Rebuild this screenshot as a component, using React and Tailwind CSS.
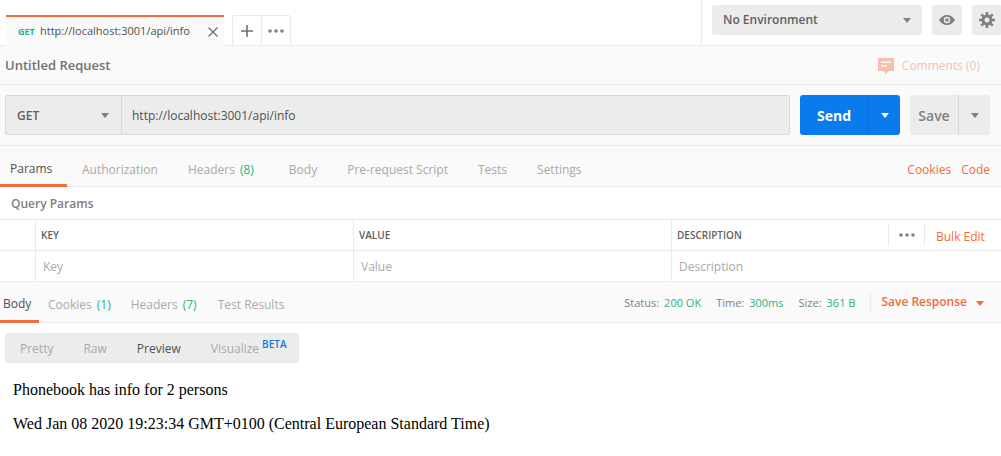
const sans = { fontFamily: '"Open Sans", sans-serif' };

const Caret = ({ className = 'border-t-[#808080]' }) => (
  <span className={`inline-block w-0 h-0 border-x-[4.5px] border-x-transparent border-t-[5px] ${className}`} />
);

const Dots = () => (
  <svg width="16" height="4" viewBox="0 0 16 4" fill="#808080">
    <circle cx="2" cy="2" r="1.8" />
    <circle cx="8" cy="2" r="1.8" />
    <circle cx="14" cy="2" r="1.8" />
  </svg>
);

function TopBar() {
  return (
    <div className="flex h-[46px] border-b border-[#eaeaea] bg-white">
      <div className="flex items-end pl-[6px]">
        <div className="flex items-center w-[218px] h-[31px] -mb-px border-t-2 border-[#f26b3a] bg-[#fafafa] pl-[12px] pr-[5px]">
          <span className="text-[9px] font-bold text-[#26b47f] w-[22px]">GET</span>
          <span className="text-[11px] text-[#505050] flex-1">http://localhost:3001/api/info</span>
          <svg width="12" height="12" viewBox="0 0 12 12" stroke="#707070" strokeWidth="1.3">
            <path d="M1.5 1.5l9 9M10.5 1.5l-9 9" />
          </svg>
        </div>
        <div className="flex h-[30px] ml-[8px] border border-b-0 border-[#eaeaea] rounded-t-[3px]">
          <div className="flex items-center justify-center w-[29px] border-r border-[#eaeaea]">
            <svg width="12" height="12" viewBox="0 0 12 12" stroke="#707070" strokeWidth="1.6">
              <path d="M6 0v12M0 6h12" />
            </svg>
          </div>
          <div className="flex items-center justify-center w-[28px]">
            <Dots />
          </div>
        </div>
      </div>
      <div className="flex flex-1 justify-end">
        <div className="flex items-start gap-[10px] w-[301px] h-[45px] border-l border-[#eaeaea] pl-[10px] pt-[5px] -mr-px">
          <div className="flex items-center justify-between w-[210px] h-[30px] rounded-[3px] bg-[#ececec] pl-[11px] pr-[11px]">
            <span className="text-[12px] font-semibold text-[#606060]">No Environment</span>
            <Caret />
          </div>
          <div className="flex items-center justify-center w-[30px] h-[30px] rounded-[3px] bg-[#ececec]">
            <svg width="16" height="10" viewBox="0 0 16 10">
              <path fill="#808080" fillRule="evenodd" d="M8 0c3.4 0 6.2 2 8 5-1.8 3-4.6 5-8 5S1.800 8 0 5c1.800-3 4.600-5 8-5zm0 1.800a3.200 3.200 0 100 6.400 3.200 3.200 0 000-6.400z" />
              <circle cx="8" cy="5" r="1.800" fill="#808080" />
            </svg>
          </div>
          <div className="flex items-center justify-center w-[30px] h-[30px] rounded-[3px] bg-[#ececec]">
            <svg width="16" height="16" viewBox="0 0 16 16" fill="none" stroke="#808080">
              <circle cx="8" cy="8" r="4" strokeWidth="3" />
              <path strokeWidth="2.600" d="M8 0v3M8 13v3M0 8h3M13 8h3M2.300 2.300l2.100 2.100M11.600 11.600l2.100 2.100M13.700 2.300l-2.100 2.100M4.400 11.600l-2.100 2.100" />
            </svg>
          </div>
        </div>
      </div>
    </div>
  );
}

function TitleRow() {
  return (
    <div className="flex items-center justify-between h-[39px] border-b border-[#eaeaea] pl-[5px] pr-[21px] pt-[2px]">
      <span className="text-[13px] font-semibold text-[#707070]">Untitled Request</span>
      <div className="flex items-center gap-[8px] opacity-40">
        <svg width="16" height="17" viewBox="0 0 16 17">
          <path fill="#f26b3a" fillRule="evenodd" d="M0 0h16v13h-5.500L8 16l-2.500-3H0zM3 3.500V5h10V3.500zM3 7v1.500h6V7z" />
        </svg>
        <span className="text-[12px] text-[#f26b3a]">Comments (0)</span>
      </div>
    </div>
  );
}

function UrlRow() {
  return (
    <div className="flex items-center h-[61px] border-b border-[#eaeaea] pl-[5px]">
      <div className="flex w-[785px] h-[40px] border border-[#d8d8d8] rounded-[2px] bg-[#ececec]">
        <div className="flex items-center justify-between w-[116px] border-r border-[#d8d8d8] pl-[11px] pr-[12px]">
          <span className="pt-[2px] text-[12px] font-semibold text-[#606060]">GET</span>
          <Caret />
        </div>
        <span className="self-center pl-[10px] pt-[2px] text-[12px] text-[#505050]">http://localhost:3001/api/info</span>
      </div>
      <div className="flex ml-[10px] w-[100px] h-[40px] rounded-[3px] bg-[#097bed] text-white">
        <span className="flex items-center justify-center w-[69px] border-r border-[#0a6fd4] text-[14px] font-bold">Send</span>
        <span className="flex flex-1 items-center justify-center"><Caret className="border-t-white" /></span>
      </div>
      <div className="flex ml-[10px] w-[80px] h-[40px] rounded-[3px] bg-[#ececec]">
        <span className="flex items-center justify-center w-[49px] border-r border-[#d8d8d8] text-[14px] font-semibold text-[#808080]">Save</span>
        <span className="flex flex-1 items-center justify-center"><Caret /></span>
      </div>
    </div>
  );
}

function RequestTabs() {
  return (
    <div className="flex items-stretch justify-between h-[41px] pt-[8px] border-b border-[#eaeaea] text-[12px] text-[#a9a9a9]">
      <div className="flex">
        <span className="flex items-center w-[67px] pl-[10px] -mb-px border-b-[3px] border-[#f26b3a] text-[#505050]">Params</span>
        <span className="flex items-center ml-[15px]">Authorization</span>
        <span className="flex items-center ml-[30px]">Headers<span className="ml-[5px] text-[#26b47f]">(8)</span></span>
        <span className="flex items-center ml-[35px]">Body</span>
        <span className="flex items-center ml-[30px]">Pre-request Script</span>
        <span className="flex items-center ml-[30px]">Tests</span>
        <span className="flex items-center ml-[30px]">Settings</span>
      </div>
      <div className="flex items-center gap-[10px] pr-[11px] text-[#f26b3a]">
        <span>Cookies</span>
        <span>Code</span>
      </div>
    </div>
  );
}

function ParamsTable() {
  return (
    <div className="bg-white">
      <div className="flex items-center h-[33px] pt-[2px] border-b border-[#eaeaea] pl-[11px] text-[12px] font-semibold text-[#808080]">Query Params</div>
      <div className="grid grid-cols-[36px_318px_318px_1fr] h-[31px] border-b border-[#eaeaea] text-[10px] font-semibold text-[#606060]">
        <div className="border-r border-[#eaeaea]" />
        <div className="flex items-center border-r border-[#eaeaea] pl-[5px] pt-[1px]">KEY</div>
        <div className="flex items-center border-r border-[#eaeaea] pl-[5px] pt-[1px]">VALUE</div>
        <div className="flex items-center pl-[5px]">
          <span className="flex-1 pt-[1px]">DESCRIPTION</span>
          <div className="flex items-center justify-center w-[37px] h-[22px] border-x border-[#eaeaea]"><Dots /></div>
          <span className="w-[76px] pl-[11px] pt-[3px] text-[12px] font-normal text-[#f26b3a]">Bulk Edit</span>
        </div>
      </div>
      <div className="grid grid-cols-[36px_318px_318px_1fr] h-[31px] border-b border-[#eaeaea] text-[12px] text-[#a9a9a9]">
        <div className="border-r border-[#eaeaea]" />
        <div className="flex items-center border-r border-[#eaeaea] pl-[7px] pt-[1px]">Key</div>
        <div className="flex items-center border-r border-[#eaeaea] pl-[7px] pt-[1px]">Value</div>
        <div className="flex items-center pl-[7px] pt-[1px]">Description</div>
      </div>
    </div>
  );
}

function ResponseTabs() {
  return (
    <div className="flex justify-between h-[41px] border-b border-[#eaeaea] text-[12px] text-[#a9a9a9]">
      <div className="flex pt-[6px]">
        <span className="flex items-center w-[39px] pl-[3px] -mb-px border-b-[3px] border-[#f26b3a] text-[#505050]">Body</span>
        <span className="flex items-center ml-[9px]">Cookies<span className="ml-[5px] text-[#26b47f]">(1)</span></span>
        <span className="flex items-center ml-[20px]">Headers<span className="ml-[5px] text-[#26b47f]">(7)</span></span>
        <span className="flex items-center ml-[21px]">Test Results</span>
      </div>
      <div className="flex items-center pr-[17px] text-[11px] text-[#808080]">
        <span className="pt-[2px]">Status:</span>
        <span className="ml-[5px] pt-[2px] text-[#26b47f]">200 OK</span>
        <span className="ml-[15px] pt-[2px]">Time:</span>
        <span className="ml-[5px] pt-[2px] text-[#26b47f]">300ms</span>
        <span className="ml-[15px] pt-[2px]">Size:</span>
        <span className="ml-[5px] pt-[2px] text-[#26b47f]">361 B</span>
        <div className="ml-[15px] h-[20px] border-l border-[#eaeaea]" />
        <span className="ml-[10px] text-[12px] font-semibold text-[#f26b3a]">Save Response</span>
        <span className="ml-[9px]"><Caret className="border-t-[#f26b3a]" /></span>
      </div>
    </div>
  );
}

function ResponseBody() {
  return (
    <div className="flex-1 bg-white pt-[10px]">
      <div className="flex items-center w-[294px] h-[30px] ml-[5px] pt-[2px] rounded-[3px] bg-[#ececec] text-[12px] text-[#a9a9a9]">
        <span className="ml-[15px]">Pretty</span>
        <span className="ml-[30px]">Raw</span>
        <span className="ml-[30px] text-[#505050]">Preview</span>
        <span className="ml-[30px]">Visualize</span>
        <span className="self-start mt-[2px] ml-[3px] text-[10px] font-semibold text-[#097bed]">BETA</span>
      </div>
      <div className="pl-[13px] pt-[18px] text-[16px] leading-[18px] text-black font-['Liberation_Serif',serif]">
        <p>Phonebook has info for 2 persons</p>
        <p className="mt-[16px]">Wed Jan 08 2020 19:23:34 GMT+0100 (Central European Standard Time)</p>
      </div>
    </div>
  );
}

export default function App() {
  return (
    <div className="flex flex-col w-[1001px] h-[456px] overflow-hidden bg-[#fafafa]" style={sans}>
      <TopBar />
      <TitleRow />
      <UrlRow />
      <RequestTabs />
      <ParamsTable />
      <ResponseTabs />
      <ResponseBody />
    </div>
  );
}
